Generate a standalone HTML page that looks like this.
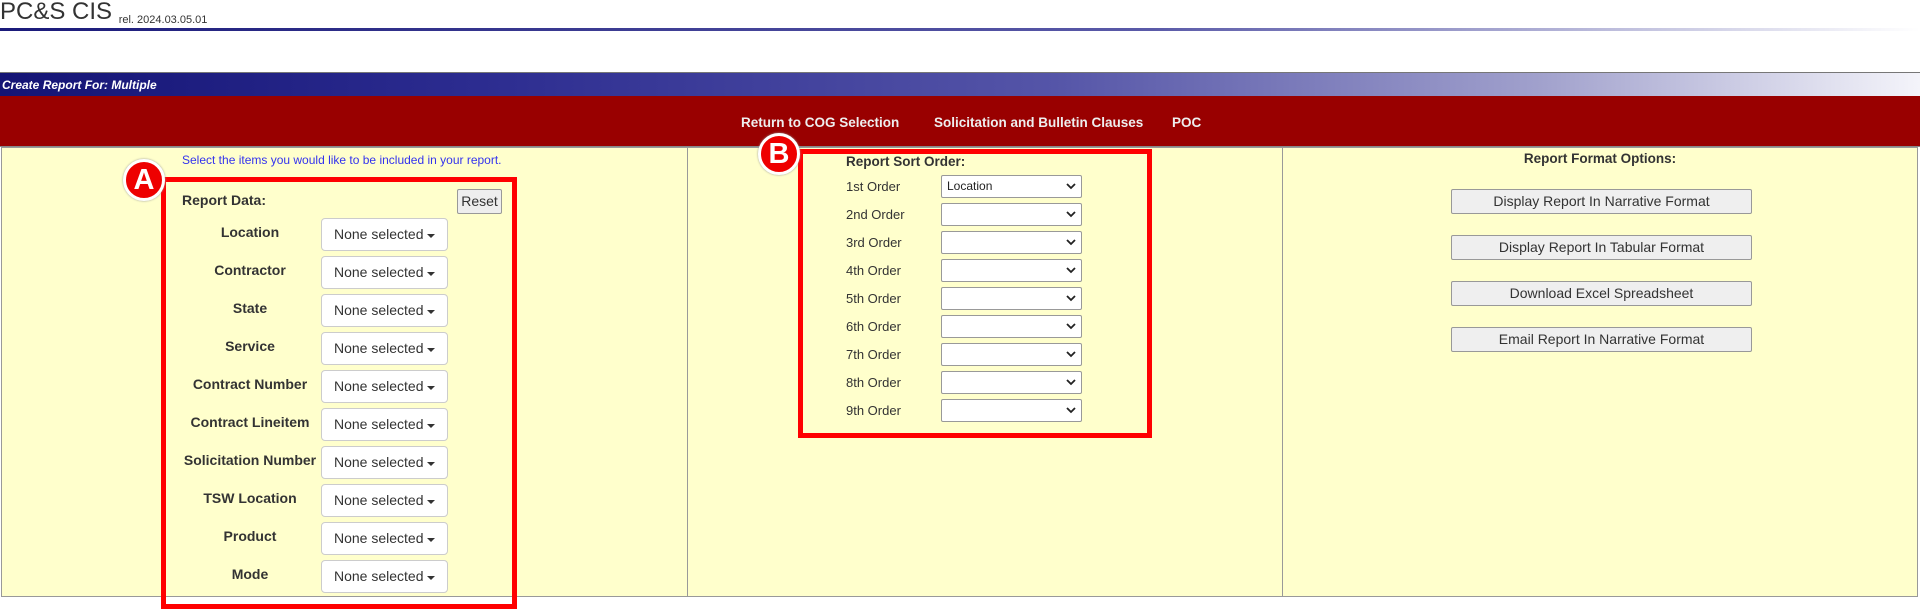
<!DOCTYPE html>
<html><head><style>
*{box-sizing:border-box;margin:0;padding:0}
body{width:1920px;height:610px;background:#fff;font-family:"Liberation Sans",Arial,sans-serif;position:relative;overflow:hidden}
.abs{position:absolute}
.title{left:0;top:-2px;font-size:24px;color:#333}
.title small{font-size:11px;vertical-align:-4px}
.hl{left:0;top:28px;width:1920px;height:3px;background:linear-gradient(90deg,#1a1a7a,#5a5aa8 60%,#fff)}
.blue{left:0;top:72px;width:1920px;height:24px;background:linear-gradient(90deg,#141475 0%,#2c2c90 25%,#5555a8 55%,#a0a0cc 80%,#f4f4fa 100%);color:#fff;font-weight:bold;font-style:italic;font-size:12px;line-height:24px;padding-left:2px;border-top:1px solid #777}
.red{left:0;top:96px;width:1920px;height:51px;background:#990000;border-bottom:1px solid #888}
.nav{color:#eee;font-weight:bold;font-size:13.5px;top:115px}
.panel{left:1px;top:147px;width:1917px;height:450px;background:#ffffcc;border:1px solid #999}
.vd{top:147px;width:1px;height:450px;background:#999}
.lbl{font-weight:bold;font-size:14px;color:#333;width:140px;text-align:center;left:180px}
.dd{left:321px;width:127px;height:33px;background:#fff;border:1px solid #ccc;border-radius:4px;font-size:14px;color:#333;line-height:31px;padding-left:12px}
.dd:after{content:"";position:absolute;right:12px;top:15px;border-left:4px solid transparent;border-right:4px solid transparent;border-top:4px solid #333}
.so{left:846px;font-size:13px;color:#333}
.sel{left:941px;width:141px;height:23px;background:#fff;border:1px solid #999;border-radius:2px;font-size:12px;color:#222;line-height:21px;padding-left:5px}
.sel svg{position:absolute;right:5px;top:7px}
.btn{left:1451px;width:301px;height:25px;background:#efefef;border:1px solid #999;border-radius:2px;font-size:14px;color:#333;text-align:center;line-height:23px}
.box{border:5px solid #f00}
.circ{width:42px;height:42px;border-radius:50%;background:#e00;border:3px solid #fff;color:#fff;font-weight:bold;font-size:29px;text-align:center;line-height:36px;box-shadow:0 0 2px #999}
</style></head><body>
<div class="abs title">PC&amp;S CIS <small>rel. 2024.03.05.01</small></div>
<div class="abs hl"></div>
<div class="abs blue">Create Report For: Multiple</div>
<div class="abs red"></div>
<div class="abs nav" style="left:741px">Return to COG Selection</div>
<div class="abs nav" style="left:934px">Solicitation and Bulletin Clauses</div>
<div class="abs nav" style="left:1172px">POC</div>
<div class="abs panel"></div>
<div class="abs vd" style="left:687px"></div>
<div class="abs vd" style="left:1282px"></div>

<div class="abs" style="left:182px;top:153px;font-size:12px;color:#3333ee">Select the items you would like to be included in your report.</div>
<div class="abs" style="left:182px;top:192px;font-size:14px;font-weight:bold;color:#333">Report Data:</div>
<div class="abs" style="left:457px;top:189px;width:45px;height:25px;background:#eee;border:1px solid #999;border-radius:2px;font-size:14px;color:#333;text-align:center;line-height:23px">Reset</div>

<div class="abs lbl" style="top:224px">Location</div><div class="abs dd" style="top:218px">None selected</div>
<div class="abs lbl" style="top:262px">Contractor</div><div class="abs dd" style="top:256px">None selected</div>
<div class="abs lbl" style="top:300px">State</div><div class="abs dd" style="top:294px">None selected</div>
<div class="abs lbl" style="top:338px">Service</div><div class="abs dd" style="top:332px">None selected</div>
<div class="abs lbl" style="top:376px">Contract Number</div><div class="abs dd" style="top:370px">None selected</div>
<div class="abs lbl" style="top:414px">Contract Lineitem</div><div class="abs dd" style="top:408px">None selected</div>
<div class="abs lbl" style="top:452px;left:176px;width:148px">Solicitation Number</div><div class="abs dd" style="top:446px">None selected</div>
<div class="abs lbl" style="top:490px">TSW Location</div><div class="abs dd" style="top:484px">None selected</div>
<div class="abs lbl" style="top:528px">Product</div><div class="abs dd" style="top:522px">None selected</div>
<div class="abs lbl" style="top:566px">Mode</div><div class="abs dd" style="top:560px">None selected</div>

<div class="abs" style="left:846px;top:154px;font-size:13.5px;font-weight:bold;color:#333">Report Sort Order:</div>
<div class="abs so" style="top:179px">1st Order</div><div class="abs sel" style="top:175px">Location<svg width="10" height="7"><path d="M1 1l4 4 4-4" stroke="#222" stroke-width="1.8" fill="none"/></svg></div>
<div class="abs so" style="top:207px">2nd Order</div><div class="abs sel" style="top:203px"><svg width="10" height="7"><path d="M1 1l4 4 4-4" stroke="#222" stroke-width="1.8" fill="none"/></svg></div>
<div class="abs so" style="top:235px">3rd Order</div><div class="abs sel" style="top:231px"><svg width="10" height="7"><path d="M1 1l4 4 4-4" stroke="#222" stroke-width="1.8" fill="none"/></svg></div>
<div class="abs so" style="top:263px">4th Order</div><div class="abs sel" style="top:259px"><svg width="10" height="7"><path d="M1 1l4 4 4-4" stroke="#222" stroke-width="1.8" fill="none"/></svg></div>
<div class="abs so" style="top:291px">5th Order</div><div class="abs sel" style="top:287px"><svg width="10" height="7"><path d="M1 1l4 4 4-4" stroke="#222" stroke-width="1.8" fill="none"/></svg></div>
<div class="abs so" style="top:319px">6th Order</div><div class="abs sel" style="top:315px"><svg width="10" height="7"><path d="M1 1l4 4 4-4" stroke="#222" stroke-width="1.8" fill="none"/></svg></div>
<div class="abs so" style="top:347px">7th Order</div><div class="abs sel" style="top:343px"><svg width="10" height="7"><path d="M1 1l4 4 4-4" stroke="#222" stroke-width="1.8" fill="none"/></svg></div>
<div class="abs so" style="top:375px">8th Order</div><div class="abs sel" style="top:371px"><svg width="10" height="7"><path d="M1 1l4 4 4-4" stroke="#222" stroke-width="1.8" fill="none"/></svg></div>
<div class="abs so" style="top:403px">9th Order</div><div class="abs sel" style="top:399px"><svg width="10" height="7"><path d="M1 1l4 4 4-4" stroke="#222" stroke-width="1.8" fill="none"/></svg></div>

<div class="abs" style="left:1282px;width:636px;text-align:center;top:151px;font-size:13.5px;font-weight:bold;color:#333">Report Format Options:</div>
<div class="abs btn" style="top:189px">Display Report In Narrative Format</div>
<div class="abs btn" style="top:235px">Display Report In Tabular Format</div>
<div class="abs btn" style="top:281px">Download Excel Spreadsheet</div>
<div class="abs btn" style="top:327px">Email Report In Narrative Format</div>

<div class="abs box" style="left:161px;top:177px;width:356px;height:432px"></div>
<div class="abs box" style="left:798px;top:149px;width:354px;height:289px"></div>
<div class="abs circ" style="left:123px;top:159px">A</div>
<div class="abs circ" style="left:758px;top:133px">B</div>
</body></html>
